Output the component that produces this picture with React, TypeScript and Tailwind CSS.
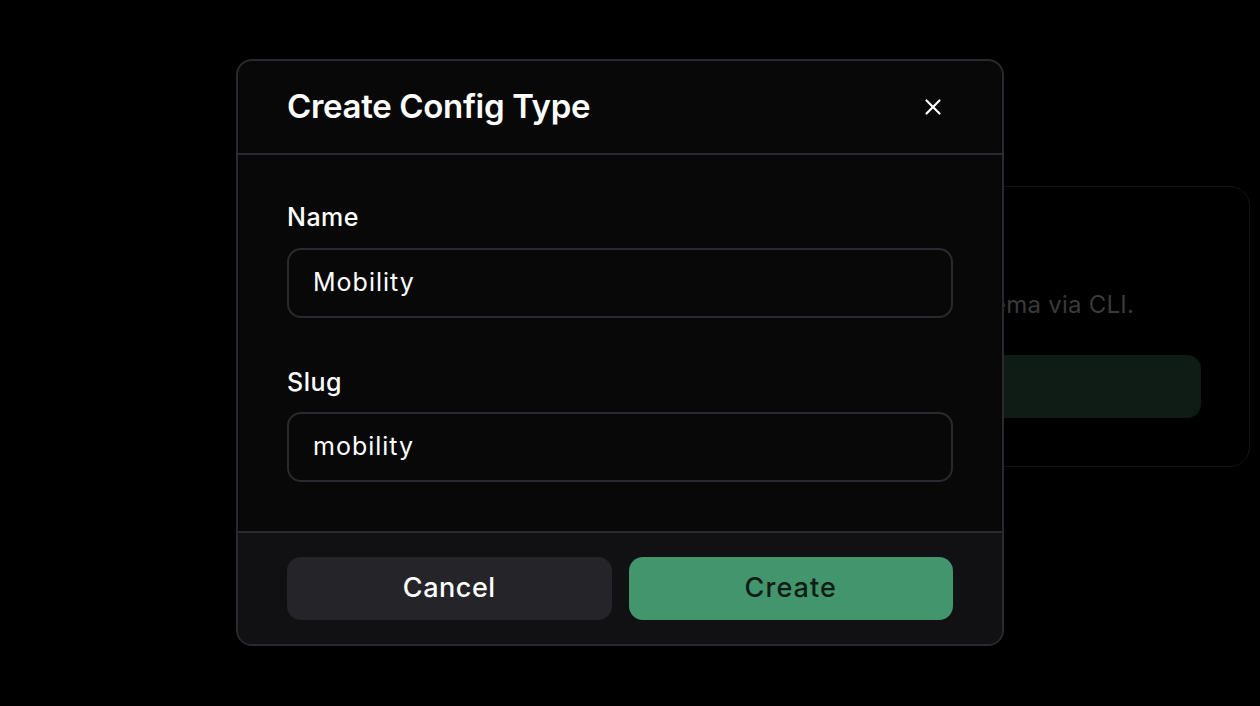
import { X } from 'lucide-react'

export default function App() {
  return (
    <div className="relative w-full h-[706px] bg-black overflow-hidden font-['Inter','Noto_Sans',sans-serif]">
      {/* page behind the dialog */}
      <div className="absolute left-[644px] top-[186px] w-[606px] h-[281px] rounded-[20px] border border-[#141414] px-[48px] pt-[40px]">
        <h3 className="text-[28px] font-semibold text-[#222]">No config types yet</h3>
        <p className="mt-[18px] text-[24px] text-[#3a3a3a] tracking-[0.01em]">Create a type or push schema via CLI.</p>
        <div className="mt-[32px] h-[63px] rounded-[14px] bg-[#0f1c16]" />
      </div>

      {/* dialog */}
      <div className="absolute left-[236px] top-[59px] w-[768px] rounded-[16px] border-2 border-[#2a2a2e] bg-[#080808] overflow-hidden">
        <div className="flex items-center justify-between h-[94px] pl-[49px] pr-[56px] border-b-2 border-[#2a2a2e]">
          <h2 className="text-[33px] font-semibold tracking-[-0.01em] text-white">Create Config Type</h2>
          <X className="w-[26px] h-[26px] text-white" strokeWidth={2} />
        </div>

        <div className="px-[49px] pt-[46px] pb-[49px] flex flex-col">
          <label className="text-[25px] font-medium text-white leading-[32px] tracking-[0.02em]">Name</label>
          <div className="mt-[15px] h-[70px] rounded-[14px] border-2 border-[#2a2a2e] flex items-center px-[24px]">
            <span className="text-[25px] text-white tracking-[0.04em]">Mobility</span>
          </div>
          <label className="mt-[48px] text-[25px] font-medium text-white leading-[32px] tracking-[0.02em]">Slug</label>
          <div className="mt-[14px] h-[70px] rounded-[14px] border-2 border-[#2a2a2e] flex items-center px-[24px]">
            <span className="text-[25px] text-white tracking-[0.04em]">mobility</span>
          </div>
        </div>

        <div className="border-t-2 border-[#2a2a2e] bg-[#111113] px-[49px] pt-[24px] pb-[24px] flex gap-[17px]">
          <button className="flex-1 h-[63px] rounded-[14px] bg-[#242429] text-[27px] font-medium tracking-[0.02em] text-white">Cancel</button>
          <button className="flex-1 h-[63px] rounded-[14px] bg-[#43956d] text-[27px] font-medium tracking-[0.04em] text-[#0f1d15]">Create</button>
        </div>
      </div>
    </div>
  )
}
